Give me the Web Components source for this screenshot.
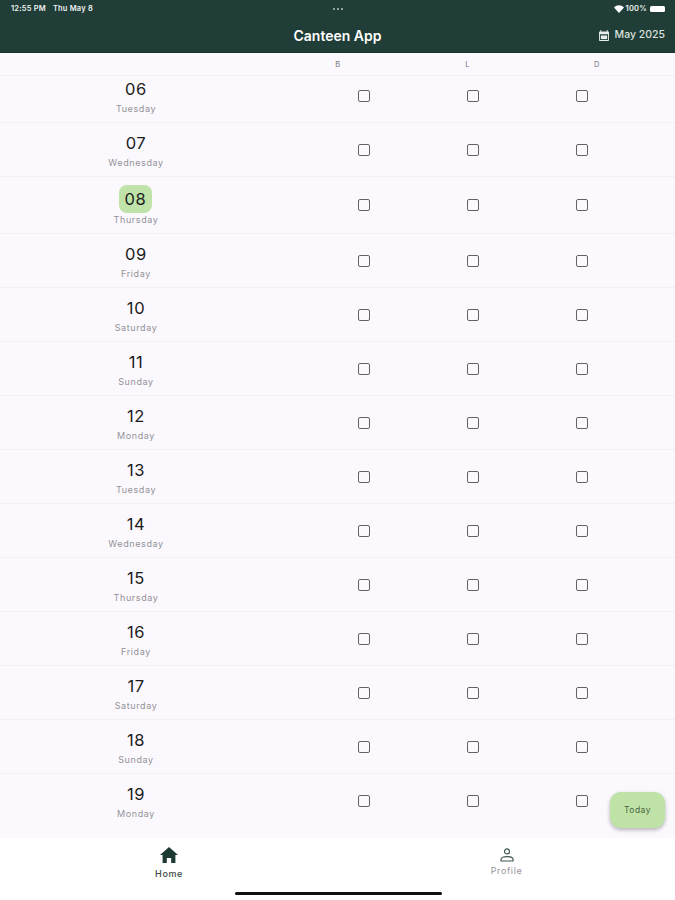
<!DOCTYPE html>
<html lang="en"><head><meta charset="utf-8"><title>Canteen App</title>
<style>
html,body{margin:0;padding:0;background:#fbf8fe;font-family:Inter,"Noto Sans",sans-serif}
</style></head><body>
<canteen-app>
  <status-bar slot="top"></status-bar>
  <app-bar slot="top" title="Canteen App" month="May 2025"></app-bar>
  <meal-header slot="list"></meal-header>
  <day-row slot="list" num="06" day="Tuesday" first></day-row>
  <day-row slot="list" num="07" day="Wednesday"></day-row>
  <day-row slot="list" num="08" day="Thursday" today></day-row>
  <day-row slot="list" num="09" day="Friday"></day-row>
  <day-row slot="list" num="10" day="Saturday"></day-row>
  <day-row slot="list" num="11" day="Sunday"></day-row>
  <day-row slot="list" num="12" day="Monday"></day-row>
  <day-row slot="list" num="13" day="Tuesday"></day-row>
  <day-row slot="list" num="14" day="Wednesday"></day-row>
  <day-row slot="list" num="15" day="Thursday"></day-row>
  <day-row slot="list" num="16" day="Friday"></day-row>
  <day-row slot="list" num="17" day="Saturday"></day-row>
  <day-row slot="list" num="18" day="Sunday"></day-row>
  <day-row slot="list" num="19" day="Monday" last></day-row>
  <today-fab slot="fab">Today</today-fab>
  <bottom-nav slot="nav"></bottom-nav>
</canteen-app>
<script>
function def(name, html){
  customElements.define(name, class extends HTMLElement{
    constructor(){super();this.attachShadow({mode:'open'});}
    connectedCallback(){
      const a={};for(const x of this.attributes)a[x.name]=x.value;
      this.shadowRoot.innerHTML=typeof html==='function'?html(a):html;
    }
  });
}
def('canteen-app',`<style>
:host{display:flex;flex-direction:column;width:675px;height:900px;position:relative;overflow:hidden;background:#fbf8fe}
.top{flex:none}
.list{flex:1;min-height:0;overflow:hidden;position:relative}
.nav{flex:none}
</style>
<div class="top"><slot name="top"></slot></div>
<div class="list"><slot name="list"></slot></div>
<div class="nav"><slot name="nav"></slot></div>
<slot name="fab"></slot>`);

def('status-bar',`<style>
:host{display:flex;align-items:center;height:17px;padding:0 10px 0 11px;background:#203d37;color:#eef2f1;font:600 7.5px/1 Inter,sans-serif;letter-spacing:.2px}
.l{flex:1;display:flex;gap:7px}
.dots{display:flex;gap:2px}
.dots i{width:2px;height:2px;border-radius:50%;background:#b9c6c2}
.r{flex:1;display:flex;justify-content:flex-end;align-items:center;gap:2px}
.bat{width:15px;height:6px;background:#fff;border-radius:1.5px;margin-left:1px}
svg{display:block}
</style>
<div class="l"><span>12:55 PM</span><span>Thu May 8</span></div>
<div class="dots"><i></i><i></i><i></i></div>
<div class="r"><svg width="10" height="8" viewBox="0 0 10 8"><path d="M0 2.6C2.8-.4 7.2-.4 10 2.6L5 8z" fill="#fff"/></svg><span>100%</span><span class="bat"></span></div>`);

def('app-bar',a=>`<style>
:host{display:block;position:relative;height:35px;background:#203d37;border-bottom:1px solid #1a332d;color:#fff}
.t{display:block;text-align:center;font:600 14px/37px Inter,sans-serif;height:35px}
.m{position:absolute;right:10px;top:1px;height:35px;display:flex;align-items:center;gap:6px;font:500 10.5px/1 Inter,sans-serif;color:#dbe2df}
svg{display:block}
</style>
<span class="t">${a.title}</span>
<span class="m"><svg width="10" height="11" viewBox="0 0 11 12"><path d="M2.5 0v1.5h6V0h1v1.5h.5A1 1 0 0 1 11 2.5V11a1 1 0 0 1-1 1H1a1 1 0 0 1-1-1V2.5a1 1 0 0 1 1-1h.5V0zM1 4.5V11h9V4.5z" fill="#e8edeb" fill-rule="evenodd"/><path d="M2 6h7v4H2z" fill="#e8edeb"/></svg>${a.month}</span>`);

def('meal-header',`<style>
:host{display:grid;grid-template-columns:repeat(3,129.5px);padding:2px 0 0 273px;height:23px;box-sizing:border-box;align-items:center;border-bottom:1px solid #f3eff5;font:400 7.5px/1 Inter,sans-serif;color:#77777c;text-align:center}
</style><span>B</span><span>L</span><span>D</span>`);

def('day-row',a=>{const t=a.today!==undefined;return `<style>
:host{display:grid;grid-template-columns:272px 37px repeat(3,109px);height:${t?57:54}px;box-sizing:border-box;${a.last!==undefined?'':'border-bottom:1px solid #f3eff5;'}align-items:start;${a.first!==undefined?'margin-top:-7px;':''}}
.d{grid-column:1;display:flex;flex-direction:column;align-items:center;margin-top:${t?8:11}px}
.n{font:400 16.5px/18px Inter,sans-serif;letter-spacing:.6px;color:#1c1c20;${t?'background:#bfe3a8;border-radius:8px;width:33px;height:28px;line-height:28px;text-align:center;margin-left:-1px;':''}}
.w{font:400 9px/11px Inter,sans-serif;letter-spacing:.6px;color:#939396;margin-top:${t?1:5}px}
.c{display:flex;justify-content:center;margin-top:${t?22:21}px}
.first{grid-column:3}
</style>
<div class="d"><span class="n">${a.num}</span><span class="w">${a.day}</span></div>
<div class="c first"><check-box></check-box></div><div class="c"><check-box></check-box></div><div class="c"><check-box></check-box></div>`});

def('check-box',`<style>
:host{display:block;width:12px;height:12px;box-sizing:border-box;border:1.5px solid #636366;border-radius:2px}
</style>`);

def('today-fab',`<style>
:host{position:absolute;left:610px;top:792px;width:55px;height:36px;display:flex;align-items:center;justify-content:center;background:#bfe2a6;border-radius:11px;box-shadow:0 2px 4px rgba(0,0,0,.28);font:400 8.5px/1 Inter,sans-serif;letter-spacing:.5px;color:#4a6445}
</style><slot></slot>`);

def('bottom-nav',`<style>
:host{display:block;position:relative;height:62px;background:#fff}
.row{display:grid;grid-template-columns:338px 337px;height:62px}
.bar{position:absolute;left:235px;top:54px;width:207px;height:3px;border-radius:2px;background:#111}
</style>
<div class="row">
<nav-item active label="Home"></nav-item>
<nav-item label="Profile"></nav-item>
</div><div class="bar"></div>`);

def('nav-item',a=>{
  const on=a.active!==undefined;
  const icon=on
   ?`<svg width="18" height="16" viewBox="0 0 18 16"><path d="M9 0 0 8h2.6v8h4.2v-5h4.4v5h4.2V8H18z" fill="#1b3a33"/></svg>`
   :`<svg width="14" height="14" viewBox="0 0 14 14" fill="none" stroke="#3e5650" stroke-width="1.2"><circle cx="7" cy="3.4" r="2.5"/><path d="M1 13v-1.6C1 9.7 4 8.6 7 8.6s6 1.1 6 2.8V13z"/></svg>`;
  return `<style>
:host{display:flex;flex-direction:column;align-items:center;padding-top:${on?9:10}px;box-sizing:border-box;font:${on?500:400} 9px/1 Inter,sans-serif;letter-spacing:.6px;color:${on?'#3a4643':'#94949a'}}
svg{display:block}
span{margin-top:${on?6:4}px}
</style>${icon}<span>${a.label}</span>`;
});
</script>
</body></html>
